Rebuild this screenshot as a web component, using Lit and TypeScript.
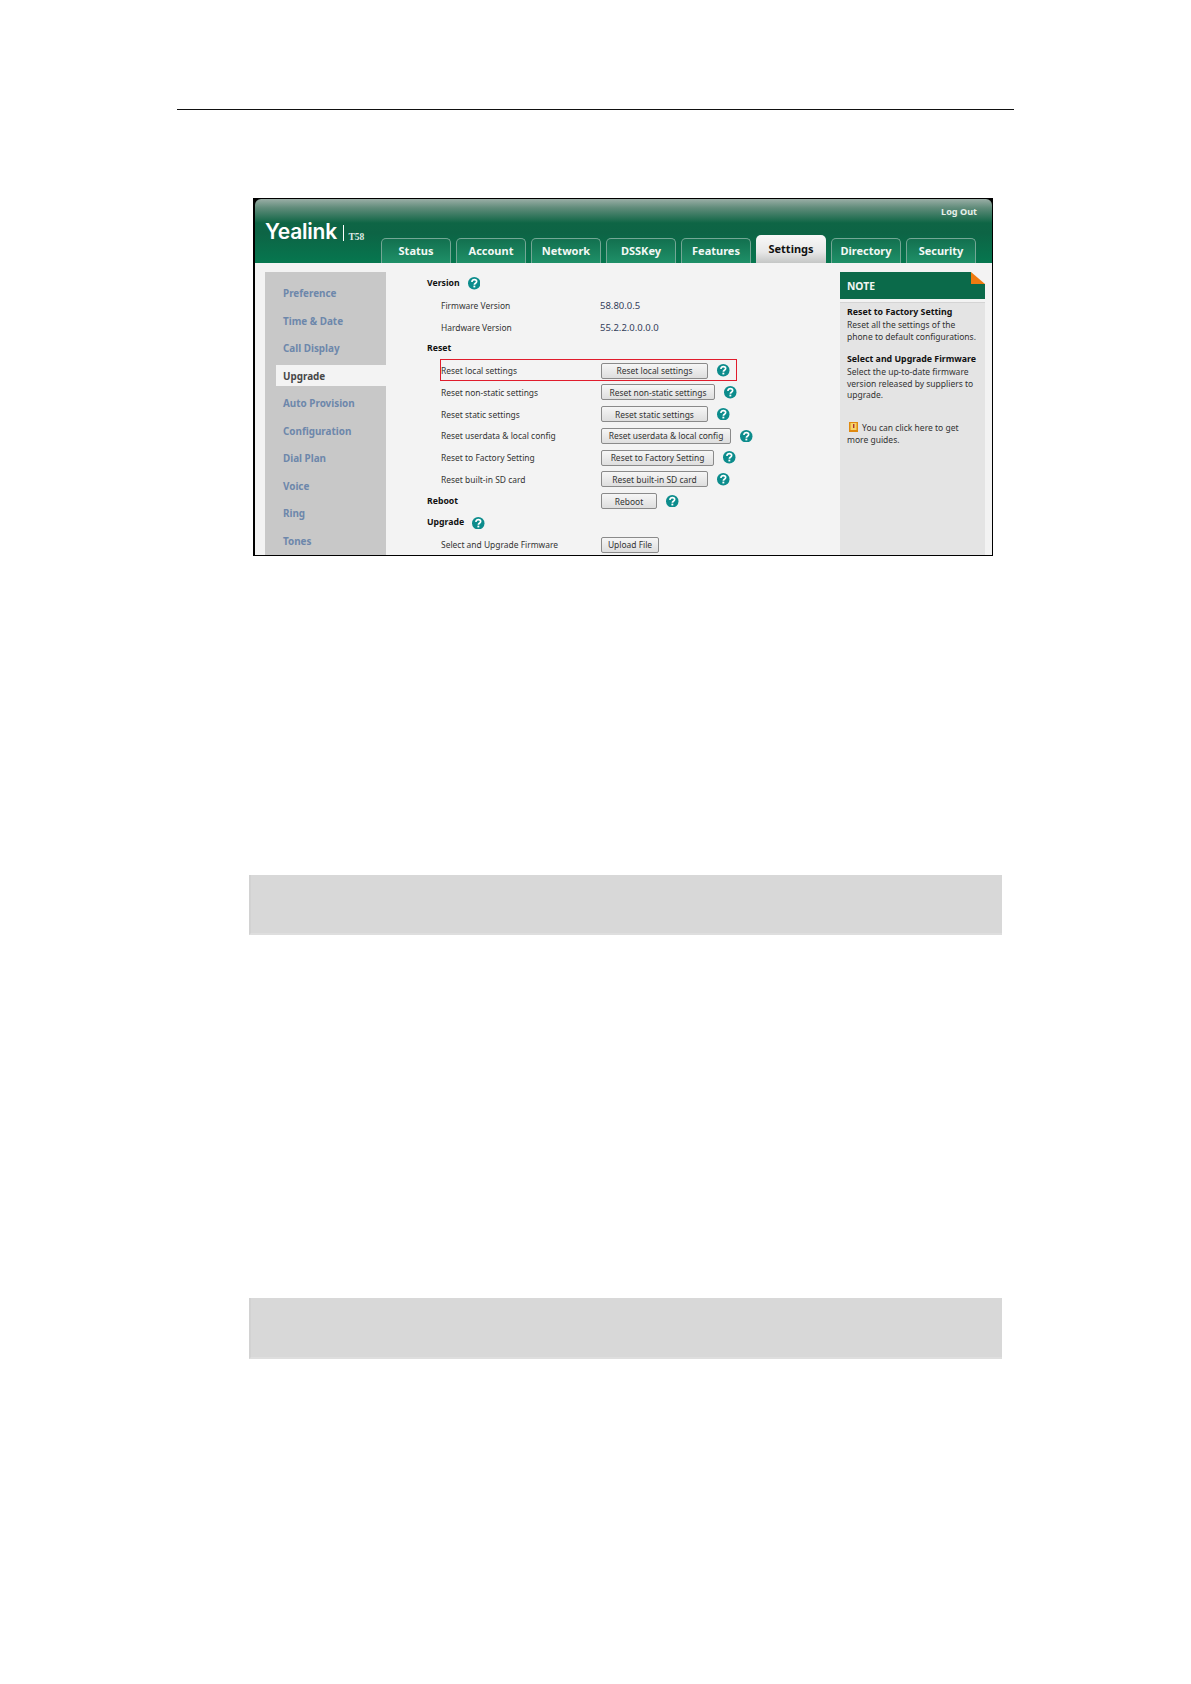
import { LitElement, html, css, svg } from "lit";
import { customElement } from "lit/decorators.js";

const TABS = ["Status", "Account", "Network", "DSSKey", "Features", "Settings", "Directory", "Security"];
const SIDE = ["Preference", "Time & Date", "Call Display", "Upgrade", "Auto Provision", "Configuration", "Dial Plan", "Voice", "Ring", "Tones"];

type Row =
  | { kind: "head"; label: string; help?: boolean; gap?: number; btn?: string; w?: number }
  | { kind: "value"; label: string; value: string }
  | { kind: "btn"; label: string; btn: string; w: number; help?: boolean };

const ROWS: Row[] = [
  { kind: "head", label: "Version", help: true, gap: 8 },
  { kind: "value", label: "Firmware Version", value: "58.80.0.5" },
  { kind: "value", label: "Hardware Version", value: "55.2.2.0.0.0.0" },
  { kind: "head", label: "Reset" },
  { kind: "btn", label: "Reset local settings", btn: "Reset local settings", w: 107, help: true },
  { kind: "btn", label: "Reset non-static settings", btn: "Reset non-static settings", w: 114, help: true },
  { kind: "btn", label: "Reset static settings", btn: "Reset static settings", w: 107, help: true },
  { kind: "btn", label: "Reset userdata & local config", btn: "Reset userdata & local config", w: 130, help: true },
  { kind: "btn", label: "Reset to Factory Setting", btn: "Reset to Factory Setting", w: 113, help: true },
  { kind: "btn", label: "Reset built-in SD card", btn: "Reset built-in SD card", w: 107, help: true },
  { kind: "head", label: "Reboot", btn: "Reboot", w: 56 },
  { kind: "head", label: "Upgrade", help: true, gap: 8 },
  { kind: "btn", label: "Select and Upgrade Firmware", btn: "Upload File", w: 58 },
];

const help = () => svg`<svg class="help" viewBox="0 0 12 12" width="12.5" height="12.5" aria-hidden="true">
  <circle cx="6" cy="6" r="6" fill="#0c8c8c"></circle>
  <path d="M3.8 4.7c0-1.4 1-2.2 2.3-2.2 1.3 0 2.2.8 2.2 1.9 0 1.6-2.2 1.6-2.2 3" fill="none" stroke="#fff" stroke-width="1.6"></path>
  <rect x="5.2" y="8.3" width="1.8" height="1.7" fill="#fff"></rect>
</svg>`;

@customElement("app-root")
export class AppRoot extends LitElement {
  static styles = css`
    :host {
      display: block;
      width: 1191px;
      height: 1684px;
      background: #fff;
      overflow: hidden;
      font-family: "Noto Sans", "DejaVu Sans", sans-serif;
    }
    .page {
      display: flex;
      flex-direction: column;
      align-items: flex-start;
      padding: 109px 0 0 177px;
    }
    .rule { width: 837px; height: 1px; background: #111; }
    .frame {
      position: relative;
      box-sizing: border-box;
      width: 740px;
      height: 358px;
      margin: 88px 0 0 76px;
      background: #000;
      border-style: solid;
      border-color: #000;
      border-width: 1px 1px 1px 2px;
      overflow: hidden;
    }
    .header {
      position: relative;
      display: flex;
      align-items: flex-end;
      height: 64px;
      padding-left: 126px;
      gap: 5px;
      border-radius: 6px 6px 0 0;
      background: linear-gradient(#9aaea6 0, #5f8b79 9px, #0e6545 24px, #0d6445 34px, #06774f 64px);
    }
    .logo {
      position: absolute;
      left: 10px;
      top: 23px;
      height: 20px;
      display: flex;
      align-items: flex-end;
      color: #fff;
    }
    .brand { font: 600 21px/20px "Inter", sans-serif; letter-spacing: -0.2px; }
    .bar { width: 1.4px; height: 16px; background: #fff; margin: 0 4px 1px 6px; }
    .model { font: bold 9.5px/10px "Liberation Serif", serif; color: #dfeae5; }
    .logout {
      position: absolute;
      right: 15px;
      top: 6px;
      font-size: 9.1px;
      line-height: 14px;
      font-weight: 700;
      color: #e6efe9;
    }
    .tab {
      box-sizing: border-box;
      flex: none;
      width: 70px;
      height: 25px;
      display: flex;
      align-items: center;
      justify-content: center;
      padding-bottom: 2px;
      border: 1px solid #74a795;
      border-bottom: 0;
      border-radius: 5px 5px 0 0;
      background: linear-gradient(#13704f, #1f9068);
      color: #f2f8f5;
      font-size: 11px;
      font-weight: 700;
    }
    .tab.on {
      height: 28px;
      padding: 0 0 1px;
      border: 0;
      background: linear-gradient(#f8f8f8 0, #e8e8e8 60%, #c4c6c5 100%);
      color: #111;
    }
    .body {
      display: flex;
      align-items: flex-start;
      height: 292px;
      background: #f3f3f3;
      overflow: hidden;
    }
    .side {
      flex: none;
      box-sizing: border-box;
      width: 121px;
      height: 283px;
      margin: 9px 0 0 10px;
      padding-top: 10.5px;
      background: #c8c8c8;
      display: flex;
      flex-direction: column;
      gap: 6.5px;
    }
    .item {
      flex: none;
      box-sizing: border-box;
      height: 21px;
      display: flex;
      align-items: center;
      padding-left: 18px;
      font-size: 9.9px;
      font-weight: 700;
      color: #6d87ab;
      white-space: nowrap;
    }
    .item.on {
      padding-left: 7px;
      margin-left: 11px;
      width: 116px;
      background: #f3f3f3;
      color: #474747;
    }
    .main {
      flex: none;
      width: 412px;
      margin-right: 1px;
      padding: 9.7px 0 0 41px;
      display: grid;
      grid-auto-rows: 21.75px;
      font-size: 8.45px;
      color: #333;
    }
    .row { display: flex; align-items: center; white-space: nowrap; }
    .label { flex: none; width: 174px; padding-left: 14px; box-sizing: border-box; }
    .row.head .label { padding-left: 0; font-weight: 700; font-size: 8.7px; color: #111; }
    .row.head.short .label { width: auto; margin-bottom: 1.5px; }
    .val { color: #34405a; font-size: 9.5px; margin-left: -1px; }
    .btn {
      flex: none;
      box-sizing: border-box;
      height: 16px;
      display: flex;
      align-items: center;
      justify-content: center;
      border: 1px solid #8a8a8a;
      border-radius: 2px;
      background: linear-gradient(#f6f6f6, #dedede);
      color: #333;
    }
    .help { flex: none; display: block; margin-left: 9px; }
    .row.short .help { margin-left: var(--g, 9px); }
    .red {
      position: absolute;
      left: 185px;
      top: 160px;
      width: 295px;
      height: 20px;
      border: 1.4px solid #e01c2c;
    }
    .note { flex: none; width: 145px; margin-top: 9px; font-size: 8.5px; }
    .note-h {
      position: relative;
      height: 27px;
      box-sizing: border-box;
      padding-left: 7px;
      display: flex;
      align-items: center;
      background: #0b6a4a;
      color: #f2f6f3;
      font-weight: 700;
      font-size: 10.3px;
    }
    .corner { position: absolute; right: 0; top: 0; display: block; }
    .note-b {
      box-sizing: border-box;
      height: 260px;
      margin-top: 3px;
      padding: 4.1px 3px 0 7px;
      background: #e4e4e4;
      border-top: 1px solid #d4d4d4;
      line-height: 11.75px;
      color: #333;
    }
    .note-b p { margin: 0 0 11.75px; }
    .note-b b { color: #111; display: block; white-space: nowrap; font-size: 8.8px; }
    .guide { margin-top: 21px !important; }
    .book {
      display: inline-block;
      vertical-align: -1px;
      width: 9px;
      height: 10px;
      margin: 0 4px 0 2px;
    }
    .shade {
      box-sizing: border-box;
      width: 753px;
      height: 60px;
      margin-left: 72px;
      background: #d8d8d8;
      border-left: 2px solid #d2d2d2;
      border-bottom: 2px solid #dedede;
    }
    .s1 { margin-top: 319px; }
    .s2 { margin-top: 363px; height: 61px; }
  `;

  private renderRow(r: Row) {
    if (r.kind === "value") {
      return html`<div class="row"><span class="label">${r.label}</span><span class="val">${r.value}</span></div>`;
    }
    if (r.kind === "head") {
      return html`<div class="row head ${r.btn ? "" : "short"}" style=${r.gap ? `--g:${r.gap}px` : ""}>
        <span class="label">${r.label}</span>
        ${r.btn ? html`<span class="btn" style="width:${r.w}px">${r.btn}</span>` : ""}
        ${r.help || r.btn ? help() : ""}
      </div>`;
    }
    return html`<div class="row">
      <span class="label">${r.label}</span>
      <span class="btn" style="width:${r.w}px">${r.btn}</span>
      ${r.help ? help() : ""}
    </div>`;
  }

  render() {
    return html`<div class="page">
      <div class="rule"></div>
      <div class="frame">
        <div class="header">
          <div class="logo">
            <span class="brand">Yealink</span><span class="bar"></span><span class="model">T58</span>
          </div>
          <span class="logout">Log Out</span>
          ${TABS.map((t) => html`<div class="tab ${t === "Settings" ? "on" : ""}">${t}</div>`)}
        </div>
        <div class="body">
          <div class="side">
            ${SIDE.map((s) => html`<div class="item ${s === "Upgrade" ? "on" : ""}">${s}</div>`)}
          </div>
          <div class="main">${ROWS.map((r) => this.renderRow(r))}</div>
          <div class="note">
            <div class="note-h">NOTE<svg class="corner" width="14" height="12" viewBox="0 0 14 12"><rect width="14" height="12" fill="#f3f3f3"></rect><polygon points="0,0 14,12 0,12" fill="#ef7b10"></polygon></svg></div>
            <div class="note-b">
              <p><b>Reset to Factory Setting</b>Reset all the settings of the phone to default configurations.</p>
              <p><b>Select and Upgrade Firmware</b>Select the up-to-date firmware version released by suppliers to upgrade.</p>
              <p class="guide"><svg class="book" viewBox="0 0 9 10"><rect width="9" height="10" fill="#e08a10"></rect><rect x="1.5" y="1" width="6" height="7" fill="#f6d36a"></rect><rect x="4" y="2" width="1.4" height="4" fill="#a33"></rect></svg>You can click here to get<br />more guides.</p>
            </div>
          </div>
        </div>
        <div class="red"></div>
      </div>
      <div class="shade s1"></div>
      <div class="shade s2"></div>
    </div>`;
  }
}
